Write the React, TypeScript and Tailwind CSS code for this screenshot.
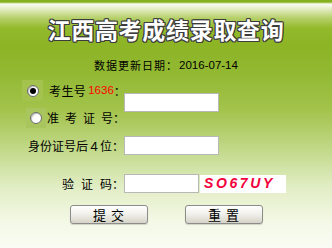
import React from 'react';

const cjk = "font-['Noto_Sans_CJK_SC',sans-serif]";

function Spaced({ chars, gap }: { chars: string[]; gap: string }) {
  return (
    <span className={`inline-flex ${gap}`}>
      {chars.map((c, i) => (
        <span key={i}>{c}</span>
      ))}
    </span>
  );
}

function Radio({ checked }: { checked?: boolean }) {
  return (
    <span className="flex h-[12px] w-[12px] items-center justify-center rounded-full border border-[#6a6a6a] bg-white shadow-[inset_1px_1px_1px_rgba(0,0,0,0.25)]">
      {checked && <span className="h-[6px] w-[6px] rounded-full bg-black" />}
    </span>
  );
}

function Field({ w }: { w: string }) {
  return <div className={`h-[19px] ${w} border border-[#b8b8b8] bg-white`} />;
}

function Button({ label }: { label: string[] }) {
  return (
    <button className="flex h-[19px] w-[78px] items-center justify-center rounded-[3px] border border-[#8c8c8c] bg-[linear-gradient(to_bottom,#ffffff,#f2f1ec_45%,#d6d4c8)] text-[13px] leading-none text-black shadow-[0_1px_1px_rgba(0,0,0,0.15)]">
      <Spaced chars={label} gap="gap-[5px]" />
    </button>
  );
}

export default function App() {
  return (
    <div
      className={`h-[248px] w-[332px] overflow-hidden bg-[linear-gradient(to_bottom,#86b01c_0px,#86b01c_2px,#fbfcf4_4px,#e4edc4_9px,#b6d06a_18px,#93ba2c_28px,#8cb424_45px,#93b934_75px,#a3c34c_110px,#c2d98a_150px,#e2eec6_188px,#f4f8e6_222px,#fafcf4_248px)] ${cjk} text-[12px] text-black`}
    >
      {/* title */}
      <div className="flex h-[52px] items-center justify-center pt-[6px]">
        <h1 className="text-[23px] font-bold leading-none tracking-[0.7px] text-white [text-shadow:1px_1px_0_#3c3c3c,-1px_-1px_0_#3c3c3c,1px_-1px_0_#3c3c3c,-1px_1px_0_#3c3c3c,0_1px_0_#3c3c3c,0_-1px_0_#3c3c3c,1px_0_0_#3c3c3c,-1px_0_0_#3c3c3c]">
          江西高考成绩录取查询
        </h1>
      </div>

      {/* update date */}
      <div className="mt-[6px] flex h-[14px] items-center justify-center text-[11px] leading-[14px]">
        <span className="tracking-[1px]">数据更新日期：</span>
        <span className="ml-[1px] font-['Liberation_Sans',sans-serif] text-[11.5px]">2016-07-14</span>
      </div>

      {/* radio choice */}
      <div className="mt-[8px] grid grid-cols-[124px_1fr] items-start">
        <div className="flex flex-col gap-[7px] whitespace-nowrap">
          <div className="flex h-[21px] items-center pl-[22px]">
            <span className="flex h-[21px] w-[21px] shrink-0 items-center justify-center bg-[#a3c24e]">
              <Radio checked />
            </span>
            <span className="ml-[6px] shrink-0 tracking-[0.4px]">考生号</span>
            <span className="ml-[2px] shrink-0 font-['Liberation_Sans',sans-serif] text-[11.5px] text-[#ff0000]">
              1636
            </span>
            <span className="shrink-0">：</span>
          </div>
          <div className="flex h-[20px] items-center pl-[26px]">
            <span className="flex h-[20px] w-[20px] shrink-0 items-center justify-center bg-[#a9c65e]">
              <Radio />
            </span>
            <span className="ml-[1px] shrink-0">
              <Spaced chars={['准', '考', '证', '号']} gap="gap-[6px]" />
            </span>
            <span className="shrink-0">：</span>
          </div>
        </div>
        <div className="mt-[13px]">
          <Field w="w-[95px]" />
        </div>
      </div>

      {/* id number */}
      <div className="mt-[8px] grid grid-cols-[124px_1fr] items-center">
        <div className="text-right">身份证号后４位：</div>
        <Field w="w-[95px]" />
      </div>

      {/* captcha */}
      <div className="mt-[19px] grid grid-cols-[124px_1fr] items-center">
        <div className="flex justify-end">
          <Spaced chars={['验', '证', '码']} gap="gap-[7px]" />
          <span>：</span>
        </div>
        <div className="flex items-center gap-[1px]">
          <Field w="w-[75px]" />
          <div className="flex h-[18px] w-[86px] items-center bg-white pl-[4px] font-['Liberation_Sans',sans-serif] text-[14px] font-bold italic tracking-[2.6px] text-[#f2003c]">
            SO67UY
          </div>
        </div>
      </div>

      {/* buttons */}
      <div className="mt-[12px] flex justify-center gap-[37px]">
        <Button label={['提', '交']} />
        <Button label={['重', '置']} />
      </div>
    </div>
  );
}
